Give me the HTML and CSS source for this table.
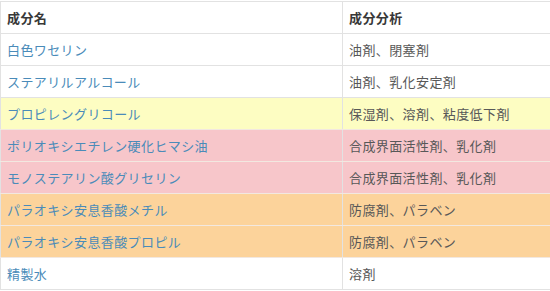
FILE: index.html
```html
<!DOCTYPE html>
<html lang="ja">
<head>
<meta charset="utf-8">
<link rel="stylesheet" href="styles.css">
</head>
<body>
<table class="ing">
  <thead>
    <tr><th class="c1">成分名</th><th class="c2">成分分析</th></tr>
  </thead>
  <tbody>
    <tr><td class="name">白色ワセリン</td><td class="desc">油剤、閉塞剤</td></tr>
    <tr><td class="name">ステアリルアルコール</td><td class="desc">油剤、乳化安定剤</td></tr>
    <tr class="yellow"><td class="name">プロピレングリコール</td><td class="desc">保湿剤、溶剤、粘度低下剤</td></tr>
    <tr class="pink"><td class="name">ポリオキシエチレン硬化ヒマシ油</td><td class="desc">合成界面活性剤、乳化剤</td></tr>
    <tr class="pink"><td class="name">モノステアリン酸グリセリン</td><td class="desc">合成界面活性剤、乳化剤</td></tr>
    <tr class="orange"><td class="name">パラオキシ安息香酸メチル</td><td class="desc">防腐剤、パラベン</td></tr>
    <tr class="orange"><td class="name">パラオキシ安息香酸プロピル</td><td class="desc">防腐剤、パラベン</td></tr>
    <tr><td class="name">精製水</td><td class="desc">溶剤</td></tr>
  </tbody>
</table>
</body>
</html>
```

FILE: styles.css
```css
html, body {
  margin: 0;
  padding: 0;
  background: #ffffff;
}
body {
  padding-top: 1px;
  font-family: "Noto Sans CJK JP", "Noto Sans", sans-serif;
  font-size: 13px;
  letter-spacing: 0.4px;
}
.ing {
  width: 560px;
  border-collapse: collapse;
  border-top: 1px solid #e2e2e2;
  border-left: 1px solid #e2e2e2;
}
.ing th, .ing td {
  height: 31px;
  padding: 0 6px;
  text-align: left;
  vertical-align: middle;
  border-bottom: 1px solid #e2e2e2;
  line-height: 18px;
  white-space: nowrap;
}
.ing .c1, .ing .name {
  width: 329px;
  border-right: 1px solid #e2e2e2;
}
.ing th {
  font-weight: bold;
  color: #383838;
}
.ing .name {
  color: #4a8bb9;
}
.ing .desc {
  color: #585858;
}
.yellow { background: #fdfdc2; }
.pink { background: #f7c6ca; }
.orange { background: #fcd39b; }
.pink td, .orange td, .yellow td { border-bottom-color: #f2e8e0; }
```
